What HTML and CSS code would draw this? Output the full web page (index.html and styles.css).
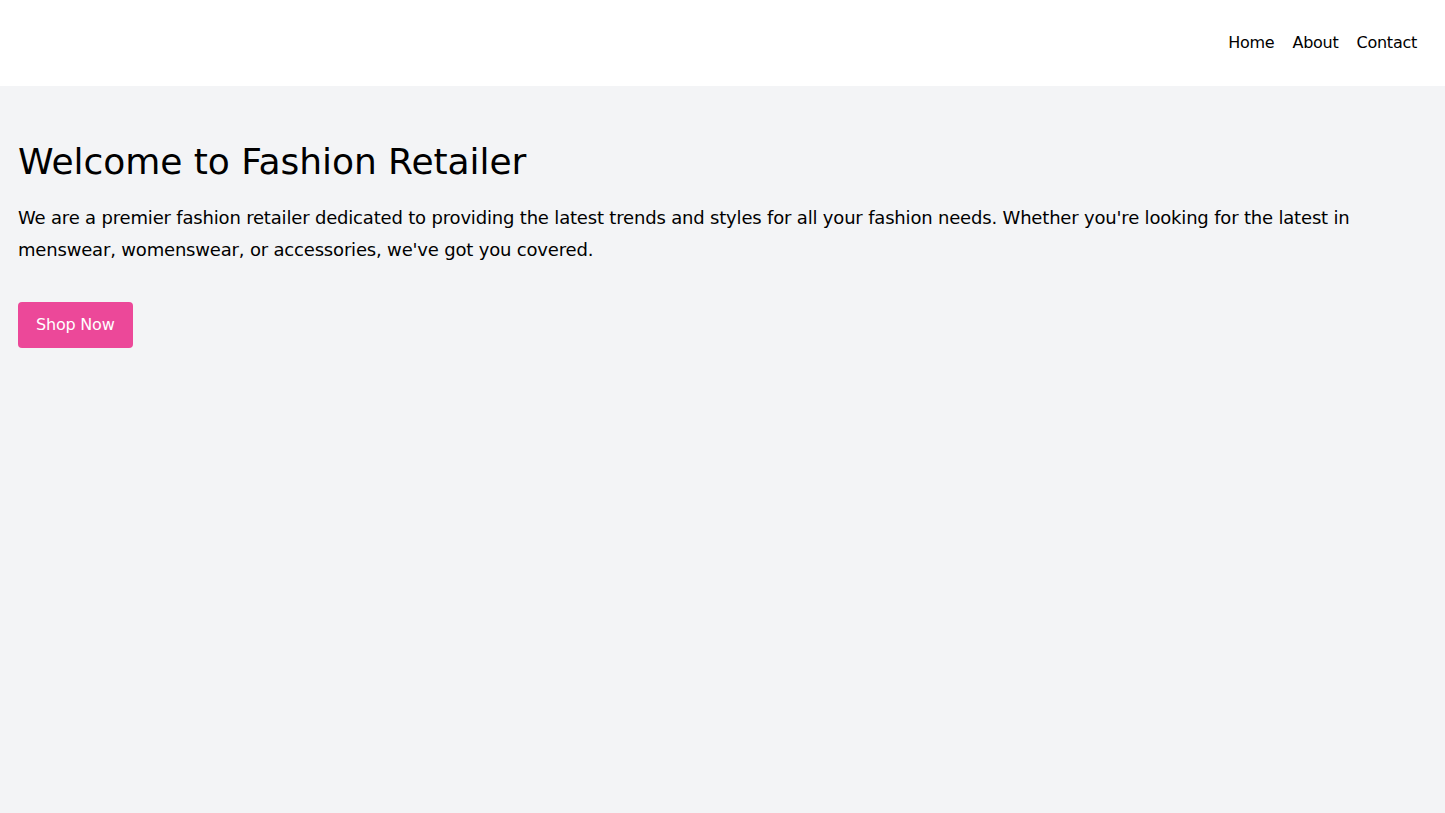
FILE: index.html
```html
<!DOCTYPE html>
<html lang="en">
<head>
    <meta charset="UTF-8">
    <meta name="viewport" content="width=device-width, initial-scale=1.0">
    <title>Fashion Retailer</title>
    <link rel="stylesheet" href="styles.css">
</head>
<body>
    <header class="site-header">
        <nav class="nav">
            <a href="#" class="nav-link">Home</a>
            <a href="#" class="nav-link">About</a>
            <a href="#" class="nav-link">Contact</a>
        </nav>
    </header>

    <main class="hero">
        <h1 class="hero-title">Welcome to Fashion Retailer</h1>
        <p class="hero-text">We are a premier fashion retailer dedicated to providing the latest trends and styles for all your fashion needs. Whether you're looking for the latest in menswear, womenswear, or accessories, we've got you covered.</p>
        <a href="#" class="btn-shop">Shop Now</a>
    </main>
</body>
</html>
```

FILE: styles.css
```css
* {
    margin: 0;
    padding: 0;
    box-sizing: border-box;
    font-family: 'DejaVu Sans', sans-serif;
}

html, body {
    height: 100%;
}

body {
    background: #f3f4f6;
    color: #000;
}

a {
    text-decoration: none;
    color: inherit;
}

.site-header {
    background: #fff;
    height: 86px;
    display: flex;
    align-items: center;
    justify-content: flex-end;
    padding: 0 28px 0 24px;
}

.nav {
    display: flex;
    gap: 18px;
    font-size: 16px;
    line-height: 24px;
    letter-spacing: -0.25px;
}

.hero {
    padding: 56px 18px;
}

.hero-title {
    font-size: 36px;
    line-height: 40px;
    font-weight: 400;
    letter-spacing: -0.05px;
    margin-bottom: 20px;
}

.hero-text {
    font-size: 18px;
    line-height: 32px;
    letter-spacing: -0.18px;
    margin-bottom: 36px;
}

.btn-shop {
    display: inline-block;
    background: #ec4899;
    color: #fff;
    font-size: 16px;
    line-height: 24px;
    letter-spacing: -0.2px;
    padding: 11px 18px;
    border-radius: 4px;
}
```
